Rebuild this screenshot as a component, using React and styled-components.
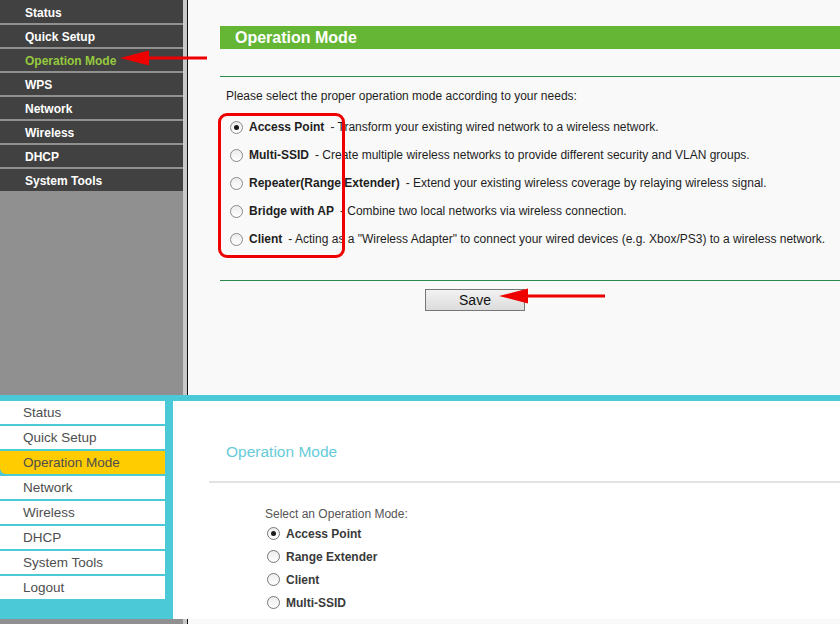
import React from "react";
import styled, { createGlobalStyle } from "styled-components";

const GlobalStyle = createGlobalStyle`
  html, body {
    margin: 0;
    padding: 0;
    background: #f9f9f9;
  }
  body {
    font-family: "Liberation Sans", Arial, sans-serif;
  }
`;

const Page = styled.div`
  width: 840px;
  height: 624px;
  overflow: hidden;
  display: flex;
  flex-direction: column;
`;

/* ---------- old firmware (top shot) ---------- */

const OldShell = styled.div`
  position: relative;
  display: flex;
  height: ${(p) => p.$height}px;
  flex-shrink: 0;
`;

const OldSidebar = styled.nav`
  width: 183px;
  background: #909090;
  display: flex;
  flex-direction: column;
  gap: 2px;
`;

const OldMenuItem = styled.div`
  height: ${(p) => (p.$first ? 23 : 22)}px;
  box-sizing: border-box;
  padding: 2px 0 0 25px;
  background: #414141;
  color: ${(p) => (p.$active ? "#95c93d" : "#ffffff")};
  font-weight: bold;
  font-size: 12px;
  display: flex;
  align-items: center;
`;

const OldDivider = styled.div`
  width: 4px;
  background: #c9c9c9;
  border-right: 1px solid #111;
`;

const OldContent = styled.main`
  flex: 1;
  background: #f9f9f9;
  padding: 26px 0 0 32px;
  display: flex;
  flex-direction: column;
  font-size: 12px;
  color: #1e1e1e;
`;

const TitleBar = styled.div`
  height: 23px;
  background: #64b634;
  color: #ffffff;
  font-weight: bold;
  font-size: 16px;
  display: flex;
  align-items: center;
  padding-left: 15px;
`;

const GreenRule = styled.div`
  height: 1px;
  background: #2a8a4c;
  margin-top: ${(p) => p.$top}px;
`;

const Intro = styled.p`
  margin: 11px 0 0 6px;
  line-height: 16px;
`;

const OldModeList = styled.div`
  margin-top: 9px;
  display: flex;
  flex-direction: column;
`;

const OldModeRow = styled.label`
  height: 28px;
  display: flex;
  align-items: center;
  padding-left: 10px;
  white-space: nowrap;
  b {
    margin: 0 6px 0 6px;
  }
`;

const Radio = styled.span`
  width: ${(p) => p.$size}px;
  height: ${(p) => p.$size}px;
  box-sizing: border-box;
  border-radius: 50%;
  border: 1px solid ${(p) => p.$border};
  background: linear-gradient(#ececec, #ffffff);
  display: inline-flex;
  align-items: center;
  justify-content: center;
  flex-shrink: 0;
  &::after {
    content: "";
    width: 5px;
    height: 5px;
    border-radius: 50%;
    background: ${(p) => (p.$checked ? "#1a1a1a" : "transparent")};
  }
`;

const SaveButton = styled.button`
  margin: 8px 0 0 205px;
  width: 100px;
  height: 22px;
  border: 1px solid #777;
  background: linear-gradient(#f2f2f2, #dcdcdc);
  font-family: "Liberation Sans", Arial, sans-serif;
  font-size: 14px;
  color: #111;
  padding: 0;
`;

const Callout = styled.div`
  position: absolute;
  left: 218px;
  top: 113px;
  width: 127px;
  height: 145px;
  box-sizing: border-box;
  border: 3px solid #ee0000;
  border-radius: 9px;
`;

const Arrow = styled.svg`
  position: absolute;
  left: ${(p) => p.$x}px;
  top: ${(p) => p.$y}px;
`;

/* ---------- new firmware (bottom shot) ---------- */

const NewShell = styled.div`
  height: 224px;
  flex-shrink: 0;
  background: #4cc9d6;
  padding-top: 6px;
  box-sizing: border-box;
  display: flex;
`;

const NewSidebar = styled.nav`
  width: 173px;
  display: flex;
  flex-direction: column;
  gap: 2px;
`;

const NewMenuItem = styled.div`
  width: 165px;
  height: 23px;
  background: ${(p) => (p.$active ? "#ffcc00" : "#ffffff")};
  border-bottom-left-radius: ${(p) => (p.$active ? "6px" : "0")};
  color: #4e4e4e;
  font-size: 13.5px;
  display: flex;
  align-items: center;
  padding-left: 23px;
  box-sizing: border-box;
`;

const NewContent = styled.main`
  flex: 1;
  background: #ffffff;
  padding: 41px 0 0 36px;
  display: flex;
  flex-direction: column;
  color: #555;
`;

const NewTitle = styled.h2`
  margin: 0 0 0 17px;
  font-weight: normal;
  font-size: 15.5px;
  line-height: 20px;
  color: #66ccd9;
`;

const GreyRule = styled.div`
  height: 2px;
  margin-top: 19px;
  background: #e2e2e2;
`;

const NewPrompt = styled.p`
  margin: 23px 0 0 56px;
  font-size: 12px;
  line-height: 16px;
  color: #555;
`;

const NewModeRow = styled.label`
  height: 23px;
  margin-left: 58px;
  display: flex;
  align-items: center;
  gap: 6px;
  font-weight: bold;
  font-size: 12px;
  color: #3a3a3a;
`;

const oldMenu = [
  "Status",
  "Quick Setup",
  "Operation Mode",
  "WPS",
  "Network",
  "Wireless",
  "DHCP",
  "System Tools",
];

const oldModes = [
  ["Access Point", "Transform your existing wired network to a wireless network."],
  ["Multi-SSID", "Create multiple wireless networks to provide different security and VLAN groups."],
  ["Repeater(Range Extender)", "Extend your existing wireless coverage by relaying wireless signal."],
  ["Bridge with AP", "Combine two local networks via wireless connection."],
  ["Client", 'Acting as a "Wireless Adapter" to connect your wired devices (e.g. Xbox/PS3) to a wireless network.'],
];

const newMenu = [
  "Status",
  "Quick Setup",
  "Operation Mode",
  "Network",
  "Wireless",
  "DHCP",
  "System Tools",
  "Logout",
];

const newModes = ["Access Point", "Range Extender", "Client", "Multi-SSID"];

const RedArrow = ({ x, y, length }) => (
  <Arrow $x={x} $y={y} width={length} height={16} viewBox={`0 0 ${length} 16`}>
    <polygon points="0,8 29,0.5 29,15.5" fill="#ee0000" />
    <rect x="28" y="6.5" width={length - 28} height="3" fill="#ee0000" />
  </Arrow>
);

const App = () => (
  <>
    <GlobalStyle />
    <Page>
      <OldShell $height={395}>
        <OldSidebar>
          {oldMenu.map((item, i) => (
            <OldMenuItem key={item} $first={i === 0} $active={item === "Operation Mode"}>
              {item}
            </OldMenuItem>
          ))}
        </OldSidebar>
        <OldDivider />
        <OldContent>
          <TitleBar>Operation Mode</TitleBar>
          <GreenRule $top={27} />
          <Intro>Please select the proper operation mode according to your needs:</Intro>
          <OldModeList>
            {oldModes.map(([name, text], i) => (
              <OldModeRow key={name}>
                <Radio $size={13} $border="#8a8a8a" $checked={i === 0} />
                <b>{name}</b>- {text}
              </OldModeRow>
            ))}
          </OldModeList>
          <GreenRule $top={27} />
          <SaveButton>Save</SaveButton>
        </OldContent>
        <Callout />
        <RedArrow x={120} y={50} length={87} />
        <RedArrow x={499} y={288} length={106} />
      </OldShell>

      <NewShell>
        <NewSidebar>
          {newMenu.map((item) => (
            <NewMenuItem key={item} $active={item === "Operation Mode"}>
              {item}
            </NewMenuItem>
          ))}
        </NewSidebar>
        <NewContent>
          <NewTitle>Operation Mode</NewTitle>
          <GreyRule />
          <NewPrompt>Select an Operation Mode:</NewPrompt>
          {newModes.map((mode, i) => (
            <NewModeRow key={mode}>
              <Radio $size={13} $border="#777" $checked={i === 0} />
              {mode}
            </NewModeRow>
          ))}
        </NewContent>
      </NewShell>

      <OldShell $height={5}>
        <OldSidebar />
        <OldDivider />
        <OldContent />
      </OldShell>
    </Page>
  </>
);

export default App;
